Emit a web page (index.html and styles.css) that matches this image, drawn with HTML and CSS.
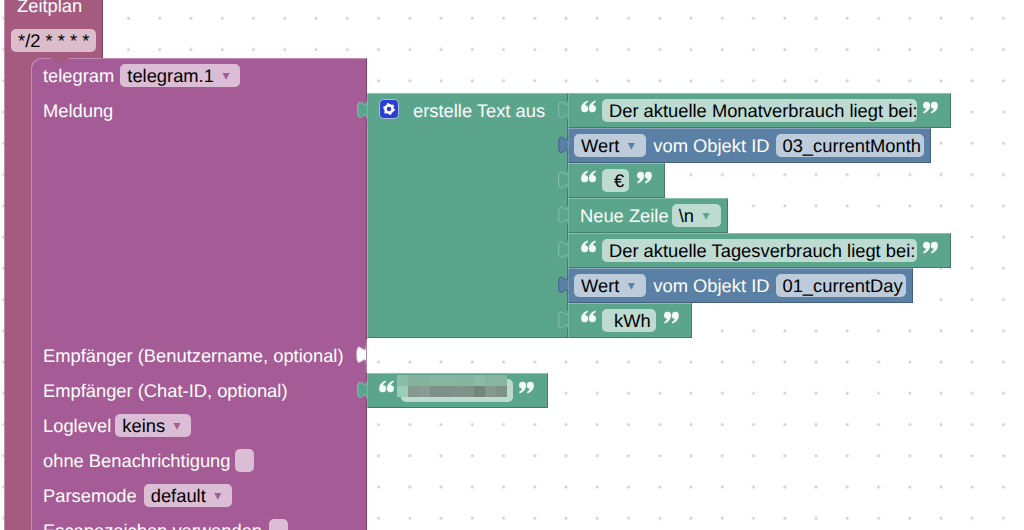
FILE: index.html
```html
<!DOCTYPE html>
<html>
<head>
    <title>Blockly Zeitplan</title>
    <link rel="stylesheet" href="styles.css">
</head>
<body>
    <svg class="defs" width="0" height="0">
        <symbol id="tab" viewBox="-8.5 0 9 28">
            <path class="tab-fill" d="M0,0 V5 C0,15 -8,-3 -8,12.5 S0,10 0,20 V28 H0.5 V0 Z"/>
            <path class="tab-line" d="M0,5 C0,15 -8,-3 -8,12.5 S0,10 0,20"/>
        </symbol>
        <symbol id="quote-open" viewBox="0 0 15 15">
            <path d="M6.600 1.500C3 2.800 .2 5.400 .2 9.300A3.500 3.500 0 1 0 4.200 6.200C4.300 5.200 5.200 4.100 7 3.100ZM14.400 1.500C10.800 2.800 8 5.400 8 9.300A3.500 3.500 0 1 0 12 6.200C12.100 5.200 13 4.100 14.800 3.100Z"/>
        </symbol>
        <symbol id="quote-close" viewBox="0 0 15 15">
            <path d="M8.400 13.500C12 12.200 14.800 9.600 14.800 5.700A3.500 3.500 0 1 0 10.800 8.800C10.700 9.800 9.800 10.900 8 11.900ZM.6 13.500C4.200 12.200 7 9.600 7 5.700A3.500 3.500 0 1 0 3 8.800C2.900 9.800 2 10.900 .2 11.900Z"/>
        </symbol>
    </svg>

    <div class="workspace">
        <div class="block schedule">
            <div class="row schedule-title">Zeitplan</div>
            <div class="row schedule-cron"><span class="field">*/2 * * * *</span></div>

            <div class="block telegram">
                <svg class="notch" viewBox="0 0 19 5"><path d="M0 0L7.500 4.500H11.500L19 0Z"/></svg>

                <div class="row row-snug">
                    <span>telegram</span>
                    <span class="field">telegram.1<span class="arrow">&#9662;</span></span>
                </div>

                <div class="row row-message">
                    <span>Meldung</span>
                    <div class="block text green join">
                        <svg class="tab"><use href="#tab"/></svg>
                        <div class="join-head">
                            <svg class="gear" viewBox="0 0 20 20">
                                <rect x=".5" y=".5" width="19" height="19" rx="4.500" class="gear-box"/>
                                <circle cx="10" cy="10" r="3.600" class="gear-ring"/>
                                <circle cx="10" cy="10" r="5" class="gear-teeth"/>
                            </svg>
                            <span>erstelle Text aus</span>
                        </div>
                        <div class="join-items">
                            <div class="block text green item">
                                <svg class="tab"><use href="#tab"/></svg>
                                <svg class="quote open"><use href="#quote-open"/></svg>
                                <span class="field field-clip">Der aktuelle Monatverbrauch liegt bei:</span>
                                <svg class="quote close"><use href="#quote-close"/></svg>
                            </div>
                            <div class="block blue item item-value">
                                <svg class="tab"><use href="#tab"/></svg>
                                <span class="field">Wert<span class="arrow">&#9662;</span></span>
                                <span>vom Objekt ID</span>
                                <span class="field field-id">03_currentMonth</span>
                            </div>
                            <div class="block text green item">
                                <svg class="tab"><use href="#tab"/></svg>
                                <svg class="quote open"><use href="#quote-open"/></svg>
                                <span class="field field-short">&nbsp;€</span>
                                <svg class="quote close"><use href="#quote-close"/></svg>
                            </div>
                            <div class="block green item item-newline">
                                <svg class="tab"><use href="#tab"/></svg>
                                <span>Neue Zeile</span>
                                <span class="field">\n<span class="arrow">&#9662;</span></span>
                            </div>
                            <div class="block text green item">
                                <svg class="tab"><use href="#tab"/></svg>
                                <svg class="quote open"><use href="#quote-open"/></svg>
                                <span class="field field-clip">Der aktuelle Tagesverbrauch liegt bei:</span>
                                <svg class="quote close"><use href="#quote-close"/></svg>
                            </div>
                            <div class="block blue item item-value">
                                <svg class="tab"><use href="#tab"/></svg>
                                <span class="field">Wert<span class="arrow">&#9662;</span></span>
                                <span>vom Objekt ID</span>
                                <span class="field field-id">01_currentDay</span>
                            </div>
                            <div class="block text green item">
                                <svg class="tab"><use href="#tab"/></svg>
                                <svg class="quote open"><use href="#quote-open"/></svg>
                                <span class="field field-short">&nbsp;kWh</span>
                                <svg class="quote close"><use href="#quote-close"/></svg>
                            </div>
                        </div>
                    </div>
                </div>

                <div class="row">
                    <span>Empfänger (Benutzername, optional)</span>
                    <svg class="tab tab-empty"><use href="#tab"/></svg>
                </div>

                <div class="row">
                    <span>Empfänger (Chat-ID, optional)</span>
                    <div class="block text green chat-id">
                        <svg class="tab"><use href="#tab"/></svg>
                        <svg class="quote open"><use href="#quote-open"/></svg>
                        <span class="field field-hidden"><span class="mosaic"></span></span>
                        <svg class="quote close"><use href="#quote-close"/></svg>
                    </div>
                </div>

                <div class="row row-tight">
                    <span>Loglevel</span>
                    <span class="field">keins<span class="arrow">&#9662;</span></span>
                </div>
                <div class="row row-tight">
                    <span>ohne Benachrichtigung</span>
                    <span class="field field-check"></span>
                </div>
                <div class="row">
                    <span>Parsemode</span>
                    <span class="field">default<span class="arrow">&#9662;</span></span>
                </div>
                <div class="row">
                    <span>Escapezeichen verwenden</span>
                    <span class="field field-check"></span>
                </div>
            </div>
        </div>
    </div>
</body>
</html>
```

FILE: styles.css
```css
/* Blockly workspace */
html, body {
    margin: 0;
    height: 100%;
}

body {
    font-family: "Liberation Sans", Arial, sans-serif;
    font-size: 18.33px;
    text-rendering: geometricPrecision;
    overflow: hidden;
}

.defs {
    position: absolute;
}

.workspace {
    position: relative;
    width: 1024px;
    height: 530px;
    overflow: hidden;
    background-color: white;
    background-image: radial-gradient(circle, #d2d2d2 1.1px, rgba(210, 210, 210, 0) 1.9px);
    background-size: 31.25px 31.25px;
    background-position: -12.1px 2.7px;
}

/* Blocks */
.block {
    position: relative;
    color: white;
    line-height: 23px;
    white-space: nowrap;
    box-shadow: inset 1px 1px 0 rgba(255, 255, 255, 0.3), inset -1px -1px 0 rgba(0, 0, 0, 0.25);
}

.green {
    background-color: #5ba58c;
    --block: #5ba58c;
    --line: #8cc4b1;
}

.blue {
    background-color: #5b80a5;
    --block: #5b80a5;
    --line: #3f5f7f;
}

.schedule {
    position: absolute;
    left: 4px;
    top: -13px;
    width: 99px;
    height: 640px;
    background-color: #a55b80;
    --block: #a55b80;
}

.telegram {
    width: 336px;
    height: 560px;
    margin-left: 27px;
    border-top-left-radius: 10px;
    background-color: #a55b96;
    --block: #a55b96;
}

.notch {
    position: absolute;
    left: 19px;
    top: 0;
    width: 19px;
    height: 5px;
    fill: #a55b80;
}

.row {
    display: flex;
    align-items: flex-start;
    gap: 7px;
    position: relative;
    height: 29px;
    padding: 6px 0 0 12px;
}

.row-snug {
    gap: 6px;
}

.row-tight {
    gap: 4px;
}

.row-message {
    height: 239px;
}

.schedule-title {
    height: 28px;
    padding: 7px 0 0 13px;
}

.schedule-cron {
    padding: 7px 0 0 7px;
}

/* Fields */
.field {
    display: flex;
    flex: none;
    height: 23px;
    padding: 0 7px;
    border-radius: 5px;
    background-color: rgba(255, 255, 255, 0.6);
    color: black;
}

.field-clip {
    display: block;
    box-sizing: border-box;
    width: 315px;
    overflow: hidden;
}

.field-id {
    padding: 0 3px 0 6px;
}

.field-short {
    padding-right: 5px;
    margin-right: 2px;
}

.field-check {
    width: 19px;
    padding: 0;
}

.field-hidden {
    position: relative;
    width: 112px;
    padding: 0;
}

.arrow {
    width: 12px;
    margin: 0 1px 0 6px;
    font-size: 14px;
    text-align: center;
    color: var(--block);
}

.item-value .arrow {
    margin-right: 2px;
}

.item-newline .arrow {
    margin-right: 2px;
}

.mosaic {
    position: absolute;
    left: -4px;
    top: -4px;
    width: 110px;
    height: 22px;
    background-image:
        linear-gradient(90deg, #8bbda9 11px, #85b29e 11px 33px, #88b4a2 33px 55px, #87b3a1 55px 77px, #8dbaa8 77px 88px, #88b5a3 88px 99px, #88b4a2 99px),
        linear-gradient(90deg, #9ccdba 11px, #86998f 11px 22px, #8a9d94 22px 33px, #7e8f87 33px 55px, #80938a 55px 66px, #7f9188 66px 77px, #73857c 77px 88px, #87998f 88px 99px, #7f9188 99px);
    background-size: 100% 11px;
    background-position: 0 0, 0 11px;
    background-repeat: no-repeat;
}

/* Puzzle tabs */
.tab {
    position: absolute;
    left: -10px;
    top: 1px;
    width: 10.6px;
    height: 35px;
    color: var(--block);
}

.tab-fill {
    fill: var(--block);
}

.tab-line {
    fill: none;
    stroke: var(--line);
    stroke-width: 0.8;
}

.tab-empty {
    left: auto;
    right: 0;
    --block: white;
    --line: #c9a6c3;
}

/* Text join block, sits to the right of its input row */
.join {
    position: absolute;
    left: 100%;
    top: 0;
    display: flex;
    width: 201px;
    height: 245px;
}

.join-head {
    display: flex;
    align-items: flex-start;
    gap: 14px;
    padding: 6px 0 0 12px;
}

.gear {
    flex: none;
    width: 20px;
    height: 20px;
}

.gear-box {
    fill: #2a3dd4;
    stroke: rgba(255, 255, 255, 0.55);
}

.gear-ring {
    fill: none;
    stroke: white;
    stroke-width: 2.600;
}

.gear-teeth {
    fill: none;
    stroke: white;
    stroke-width: 1.800;
    stroke-dasharray: 2.200 3.036;
}

.join-items {
    position: absolute;
    left: 100%;
    top: 0;
    display: flex;
    flex-direction: column;
    align-items: flex-start;
}

.item {
    display: flex;
    align-items: flex-start;
    gap: 6px;
    height: 29px;
    padding: 6px 13px 0;
}

.item-value {
    gap: 7px;
    padding: 6px 7px 0 6px;
}

.item-newline {
    gap: 3px;
    padding: 6px 7px 0 12px;
}

.chat-id {
    position: absolute;
    left: 100%;
    top: 0;
    display: flex;
    align-items: flex-start;
    gap: 6px;
    height: 29px;
    padding: 6px 14px 0 12px;
}

.chat-id .open {
    margin-right: 1px;
}

.quote {
    flex: none;
    width: 15px;
    height: 15px;
    fill: #f4f9f7;
}

.close {
    margin-top: 1px;
}
```
